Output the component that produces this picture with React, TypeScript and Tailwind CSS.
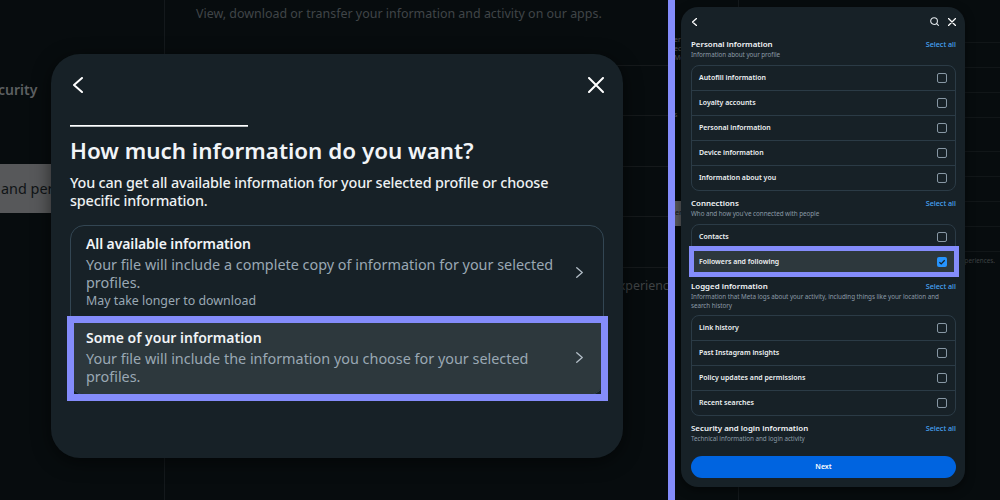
import type { ReactNode } from 'react'

type Section = {
  title: string
  subtitle: string
  items: { label: string; checked?: boolean }[]
  box: string
  head: string
  subClass: string
  divider: string
}

const sections: Section[] = [
  {
    title: 'Personal information',
    subtitle: 'Information about your profile',
    items: [
      { label: 'Autofill information' },
      { label: 'Loyalty accounts' },
      { label: 'Personal information' },
      { label: 'Device information' },
      { label: 'Information about you' },
    ],
    head: 'pt-0',
    subClass: 'h-[15px]',
    box: 'h-[126px]',
    divider: 'border-t',
  },
  {
    title: 'Connections',
    subtitle: "Who and how you've connected with people",
    items: [{ label: 'Contacts' }, { label: 'Followers and following', checked: true }],
    head: 'pt-[6px]',
    subClass: 'h-[15px]',
    box: 'h-[51px]',
    divider: 'border-t',
  },
  {
    title: 'Logged information',
    subtitle:
      'Information that Meta logs about your activity, including things like your location and search history',
    items: [
      { label: 'Link history' },
      { label: 'Past Instagram insights' },
      { label: 'Policy updates and permissions' },
      { label: 'Recent searches' },
    ],
    head: 'pt-[5px]',
    subClass: 'h-[23px]',
    box: 'h-[101px]',
    divider: 'border-t-[1.5px]',
  },
  {
    title: 'Security and login information',
    subtitle: 'Technical information and login activity',
    items: [],
    head: 'pt-[6px]',
    subClass: 'h-[16px]',
    box: '',
    divider: '',
  },
]

function Chevron({ dir, className, width }: { dir: 'left' | 'right'; className: string; width: number }) {
  return (
    <svg viewBox="0 0 10 16" className={className} fill="none" stroke="currentColor" strokeWidth={width} strokeLinecap="round" strokeLinejoin="round">
      <path d={dir === 'left' ? 'M9 1 1 8l8 7' : 'm1 1 8 7-8 7'} />
    </svg>
  )
}

function Cross({ className, width }: { className: string; width: number }) {
  return (
    <svg viewBox="0 0 16 16" className={className} fill="none" stroke="currentColor" strokeWidth={width} strokeLinecap="round">
      <path d="m1 1 14 14M15 1 1 15" />
    </svg>
  )
}

function Checkbox({ checked }: { checked?: boolean }) {
  if (checked) {
    return (
      <span className="flex size-[10px] items-center justify-center rounded-[2px] bg-[#2694fe]">
        <svg viewBox="0 0 10 10" className="size-[10px]" fill="none" stroke="#172127" strokeWidth="1.3">
          <path d="m2.4 5.2 1.8 1.7 3.5-3.7" />
        </svg>
      </span>
    )
  }
  return <span className="size-[10px] rounded-[2px] border border-[#8797a4]" />
}

function Option({
  title,
  titleClass = '',
  children,
  className,
}: {
  title: string
  titleClass?: string
  children: ReactNode
  className: string
}) {
  return (
    <div className={`relative flex items-center justify-between pl-[15px] pr-[20px] ${className}`}>
      <div className="text-[14.4px] leading-[18px] text-[#9aa8b4]">
        <div className={`mb-[3px] text-[14px] font-semibold leading-[18px] text-[#f1f4f7] ${titleClass}`}>{title}</div>
        {children}
      </div>
      <Chevron dir="right" className="h-[11px] w-[7px] shrink-0 text-[#b3bec7]" width={1.9} />
    </div>
  )
}

function LeftPane() {
  return (
    <section className="relative flex h-[500px] w-[668px] shrink-0 overflow-hidden bg-[#070c0e]">
      <aside className="flex w-[165px] shrink-0 flex-col border-r border-[#14191c]">
        <div className="pt-[80px] text-[14px] font-semibold leading-[20px] text-[#5d6062]">
          <div className="-ml-[2px]">curity</div>
        </div>
        <div className="mt-[64px] flex h-[49px] items-center bg-[#57585a] pl-px text-[14.4px] text-[#101416]">and per</div>
      </aside>
      <main className="flex grow flex-col">
        <p className="pl-[31px] pt-[5px] text-[12.45px] leading-[18px] text-[#404548]">
          View, download or transfer your information and activity on our apps.
        </p>
        <div className="mt-[42px] flex flex-col">
          <div className="h-[50px] border-t border-[#15191b]" />
          <div className="h-[51px] border-t border-[#15191b]" />
          <div className="h-[50px] border-t border-[#15191b]" />
          <div className="h-[51px] border-t border-[#15191b]" />
          <div className="border-t border-[#15191b]" />
        </div>
        <p className="ml-[447px] mt-[9px] whitespace-nowrap text-[12.4px] leading-[18px] text-[#3e4244]">experiences.</p>
      </main>

      <div className="absolute left-[51px] top-[54px] flex h-[404px] w-[572px] flex-col rounded-[29px] bg-[#172127] px-[19px] shadow-[0_4px_18px_rgba(0,0,0,0.55)]">
        <div className="flex h-[61px] items-center justify-between pl-[3px]">
          <Chevron dir="left" className="h-[16px] w-[10px] text-white" width={2} />
          <Cross className="size-[16px] text-white" width={2} />
        </div>
        <div className="mt-[10px] h-[2px] w-[178px] border-b border-[#b9bfc2] bg-white" />
        <h1 className="mt-[10px] text-[22.4px] font-semibold leading-[28px] text-[#f1f4f7]">How much information do you want?</h1>
        <p className="mt-[9px] w-[500px] text-[14.4px] font-medium leading-[18px] tracking-[-0.16px] text-[#eef1f3]">
          You can get all available information for your selected profile or choose specific information.
        </p>
        <div className="mt-[15px] h-[170px] w-[534px] rounded-[14px] border border-[#334653]">
          <Option title="All available information" titleClass="tracking-[-0.1px]" className="h-[94px] pb-[2px]">
            <div>Your file will include a complete copy of information for your selected</div>
            <div>profiles.</div>
            <div className="text-[12.4px]">May take longer to download</div>
          </Option>
          <div className="relative rounded-b-[13px] bg-[#2d383d]">
            <Option title="Some of your information" className="h-[74px]">
              <div>Your file will include the information you choose for your selected</div>
              <div>profiles.</div>
            </Option>
            <div className="absolute -left-[4px] -top-[4px] h-[85px] w-[541px] border-[7px] border-[#848cfb]" />
          </div>
        </div>
      </div>
    </section>
  )
}

function RightPane() {
  return (
    <section className="relative flex h-[500px] w-[325px] shrink-0 overflow-hidden bg-[#070c0e]">
      <aside className="flex w-[64px] shrink-0 flex-col border-r border-[#14191c] text-[7px]">
        <div className="-ml-px pt-[35px] leading-[9px] text-[#55585a]">
          <div>er</div>
          <div>ec</div>
          <div>Me</div>
        </div>
        <div className="-ml-px mt-[48px] leading-[9px] text-[#55585a]">s</div>
        <div className="mt-[82px] flex h-[25px] items-center bg-[#57585a] text-[#101416]">er</div>
      </aside>
      <main className="flex grow flex-col pt-[42px]">
        <div className="h-[25px] border-t border-[#111618]" />
        <div className="h-[25px] border-t border-[#111618]" />
        <div className="h-[25px] border-t border-[#111618]" />
        <div className="h-[34px] border-t border-[#111618]" />
        <div className="h-[25px] border-t border-[#111618]" />
        <div className="h-[25px] border-t border-[#111618]" />
        <div className="h-[25px] border-t border-[#111618]" />
        <div className="h-[25px] border-t border-[#111618]" />
        <div className="border-t border-[#111618]" />
        <p className="pr-[5px] pt-[4px] text-right text-[6.3px] leading-[9px] text-[#3e4244]">experiences.</p>
      </main>

      <div className="absolute left-[6px] top-[7px] flex h-[480px] w-[284px] flex-col rounded-[17px] bg-[#172127] pl-[10px] pr-[9px] shadow-[0_3px_10px_rgba(0,0,0,0.5)]">
        <div className="flex h-[31px] shrink-0 items-center pb-[1px] pl-[1px]">
          <Chevron dir="left" className="h-[8px] w-[5px] text-white" width={2.6} />
          <svg viewBox="0 0 16 16" className="ml-auto mr-[9px] mt-[-2px] size-[9px] text-[#e3e8ec]" fill="none" stroke="currentColor" strokeWidth="1.9" strokeLinecap="round">
            <circle cx="7.2" cy="7.2" r="6" />
            <path d="m11.8 11.8 3.2 3.2" />
          </svg>
          <Cross className="size-[8px] text-white" width={2.5} />
        </div>
        {sections.map((s) => (
          <div key={s.title} className="shrink-0">
            <div className={s.head}>
              <div className="flex h-[12px] items-center justify-between">
                <h2 className="text-[7.9px] font-semibold leading-[12px] text-[#f1f4f7]">{s.title}</h2>
                <span className="text-[7.2px] font-medium leading-[12px] text-[#48a4f5]">Select all</span>
              </div>
              <p className={`${s.subClass} w-[256px] pt-[1px] text-[6.3px] leading-[8.5px] tracking-[-0.05px] text-[#8b9aa6]`}>{s.subtitle}</p>
            </div>
            {s.items.length > 0 && (
              <div className={`${s.box} flex w-[265px] flex-col rounded-[8px] border border-[#2b3b46]`}>
                {s.items.map((it, i) => (
                  <div
                    key={it.label}
                    className={`relative flex min-h-0 flex-1 items-center justify-between pl-[7px] pr-[8px] ${i > 0 ? `${s.divider} border-[#2b3b46]` : ''} ${it.checked ? 'rounded-b-[7px] bg-[#2d383d]' : ''}`}
                  >
                    <span className="text-[6.95px] font-semibold leading-[10px] text-[#eef1f3]">{it.label}</span>
                    <Checkbox checked={it.checked} />
                    {it.checked && (
                      <div className="absolute -left-[3px] -top-[4px] h-[31px] w-[270px] border-[5px] border-[#848cfb]" />
                    )}
                  </div>
                ))}
              </div>
            )}
          </div>
        ))}
        <button className="mb-[9px] mt-auto h-[22px] w-[265px] shrink-0 rounded-full bg-[#0064e0] text-[7px] font-semibold leading-[22px] text-white">
          Next
        </button>
      </div>
    </section>
  )
}

export default function App() {
  return (
    <div className="flex h-[500px] w-[1000px] overflow-hidden bg-[#070c0e] font-['Noto_Sans',sans-serif]">
      <LeftPane />
      <div className="h-full w-[7px] shrink-0 bg-[#848cfb]" />
      <RightPane />
    </div>
  )
}
